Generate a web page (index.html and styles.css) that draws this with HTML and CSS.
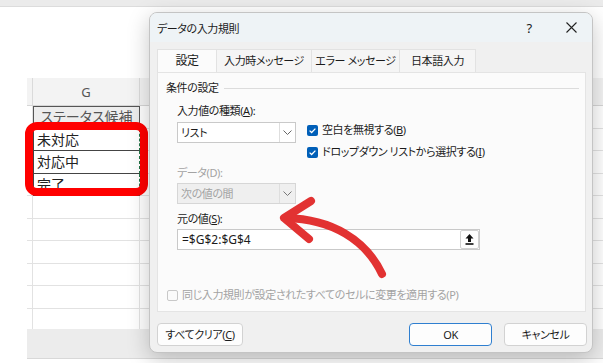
FILE: index.html
```html
<!DOCTYPE html>
<html lang="ja">
<head>
    <meta charset="UTF-8">
    <meta name="viewport" content="width=device-width, initial-scale=1.0">
    <title>データの入力規則</title>
    <link rel="stylesheet" href="styles.css">
</head>
<body>

<div class="screen">
    <!-- Excel sheet behind the dialog -->
    <div class="ribbon-edge"></div>
    <div class="sheet">
        <div class="row col-head">
            <div class="cell c-f"></div>
            <div class="cell c-g">G</div>
            <div class="cell c-h"></div>
        </div>
        <div class="row">
            <div class="cell c-f"></div>
            <div class="cell c-g title-cell">ステータス候補</div>
            <div class="cell c-h"></div>
        </div>
        <div class="row">
            <div class="cell c-f"></div>
            <div class="cell c-g pick">未対応</div>
            <div class="cell c-h"></div>
        </div>
        <div class="row">
            <div class="cell c-f"></div>
            <div class="cell c-g pick">対応中</div>
            <div class="cell c-h"></div>
        </div>
        <div class="row">
            <div class="cell c-f"></div>
            <div class="cell c-g pick">完了</div>
            <div class="cell c-h"></div>
        </div>
        <div class="row"><div class="cell c-f"></div><div class="cell c-g"></div><div class="cell c-h"></div></div>
        <div class="row"><div class="cell c-f"></div><div class="cell c-g"></div><div class="cell c-h"></div></div>
        <div class="row"><div class="cell c-f"></div><div class="cell c-g"></div><div class="cell c-h"></div></div>
        <div class="row"><div class="cell c-f"></div><div class="cell c-g"></div><div class="cell c-h"></div></div>
        <div class="row"><div class="cell c-f"></div><div class="cell c-g"></div><div class="cell c-h"></div></div>
        <div class="row"><div class="cell c-f"></div><div class="cell c-g"></div><div class="cell c-h"></div></div>
    </div>
    <div class="sheet-tabs"></div>

    <!-- red marker around the list cells -->
    <div class="marker-box"></div>

    <!-- the dialog window -->
    <div class="dialog">
        <div class="dlg-title">
            <span class="dlg-caption">データの入力規則</span>
            <span class="tb-help">?</span>
            <span class="tb-close">
                <svg width="11" height="11" viewBox="0 0 11 11"><path d="M0.5 0.5 L10.5 10.5 M10.5 0.5 L0.5 10.5" stroke="#222" stroke-width="1.1" fill="none"/></svg>
            </span>
        </div>

        <div class="tabs">
            <div class="tab active">設定</div>
            <div class="tab t2">入力時メッセージ</div>
            <div class="tab t3">エラー メッセージ</div>
            <div class="tab t4">日本語入力</div>
        </div>

        <div class="panel">
            <div class="legend">条件の設定</div>
            <div class="group-body">
                <div class="field-label">入力値の種類(<u>A</u>):</div>
                <div class="type-row">
                    <div class="select">
                        <span class="select-text">リスト</span>
                        <span class="select-arrow">
                            <svg width="9" height="5" viewBox="0 0 9 5"><path d="M0.5 0.5 L4.5 4.5 L8.5 0.5" stroke="#666" stroke-width="1" fill="none"/></svg>
                        </span>
                    </div>
                    <div class="checks">
                        <div class="check-item">
                            <span class="checkbox on">
                                <svg width="11" height="11" viewBox="0 0 11 11"><path d="M2.6 5.6 L4.6 7.5 L8.4 3.6" stroke="#fff" stroke-width="1.3" fill="none"/></svg>
                            </span>
                            空白を無視する(<u>B</u>)
                        </div>
                        <div class="check-item">
                            <span class="checkbox on">
                                <svg width="11" height="11" viewBox="0 0 11 11"><path d="M2.6 5.6 L4.6 7.5 L8.4 3.6" stroke="#fff" stroke-width="1.3" fill="none"/></svg>
                            </span>
                            ドロップダウン リストから選択する(<u>I</u>)
                        </div>
                    </div>
                </div>
                <div class="field-label muted second">データ(D):</div>
                <div class="select disabled">
                    <span class="select-text">次の値の間</span>
                    <span class="select-arrow">
                        <svg width="9" height="5" viewBox="0 0 9 5"><path d="M0.5 0.5 L4.5 4.5 L8.5 0.5" stroke="#777" stroke-width="1" fill="none"/></svg>
                    </span>
                </div>
                <div class="field-label third">元の値(<u>S</u>):</div>
                <div class="ref-input">
                    <span class="ref-text">=$G$2:$G$4</span>
                    <span class="ref-btn">
                        <svg width="9" height="11" viewBox="0 0 9 11"><path d="M4.5 0 L8.5 4.4 H6 V8 H3 V4.4 H0.5 Z" fill="#111"/><rect x="0.5" y="9.2" width="8" height="1.6" fill="#111"/></svg>
                    </span>
                </div>
            </div>
            <div class="apply-row">
                <span class="checkbox off"></span>
                同じ入力規則が設定されたすべてのセルに変更を適用する(P)
            </div>
        </div>

        <div class="dlg-footer">
            <div class="btn clear">すべてクリア(<u>C</u>)</div>
            <div class="btn ok">OK</div>
            <div class="btn cancel">キャンセル</div>
        </div>
    </div>

    <!-- red hand-drawn arrow pointing at the source field -->
    <svg class="marker-arrow" width="603" height="363" viewBox="0 0 603 363">
        <path d="M382 274 C366 240, 332 219, 286 218" stroke="#e23232" stroke-width="8" fill="none" stroke-linecap="round"/>
        <path d="M311 201 L284 218 L309 239" stroke="#e23232" stroke-width="8" fill="none" stroke-linecap="round" stroke-linejoin="round"/>
    </svg>
</div>

</body>
</html>
```

FILE: styles.css
```css
html, body {
    margin: 0;
    padding: 0;
    width: 603px;
    height: 363px;
    overflow: hidden;
    background: #fff;
}
body {
    font-family: "Noto Sans", "Noto Sans CJK JP", sans-serif;
    font-feature-settings: "palt";
    color: #1b1b1b;
}
.screen {
    position: relative;
    width: 603px;
    height: 363px;
    overflow: hidden;
}

/* sheet */
.ribbon-edge {
    height: 6px;
    background: #ebebeb;
    border-bottom: 1px solid #dcdcdc;
}
.sheet {
    margin-top: 71px;
    margin-left: 27px;
    height: 251px;
    overflow: hidden;
}
.row {
    display: flex;
    height: 22.5px;
    border-bottom: 1px solid #e2e2e2;
    box-sizing: border-box;
}
.cell {
    box-sizing: border-box;
    border-right: 1px solid #e2e2e2;
    font-size: 14px;
    line-height: 21px;
    color: #222;
}
.c-f { width: 6px; }
.c-g { width: 107px; padding-left: 3px; white-space: nowrap; overflow: hidden; }
.c-h { flex: 1; border-right: none; }
.col-head {
    height: 28px;
    background: #f3f3f3;
    border-bottom: 1px solid #d6d6d6;
}
.col-head .cell {
    line-height: 28px;
    color: #555;
    font-size: 13px;
    border-right-color: #dadada;
}
.col-head .c-g { text-align: center; padding-left: 0; }
.title-cell {
    background: #ededed;
    border: 1px solid #555;
    text-align: center;
    padding-left: 0;
    color: #555;
    line-height: 20px;
}
.pick {
    border-left: 1px solid #444;
    border-bottom: 1px solid #444;
    border-right: 1px dashed #217346;
    margin-bottom: -1px;
    line-height: 21px;
}
.sheet-tabs {
    height: 29px;
    margin-left: 27px;
    background: #ececec;
    border-bottom: 1px solid #d8d8d8;
}

/* annotations */
.marker-box {
    position: absolute;
    left: 25px;
    top: 122px;
    width: 123px;
    height: 74px;
    box-sizing: border-box;
    border: 8px solid #ff0000;
    border-radius: 12px;
}
.marker-arrow {
    position: absolute;
    left: 0;
    top: 0;
}

/* dialog */
.dialog {
    position: absolute;
    left: 149px;
    top: 12px;
    width: 444px;
    height: 341px;
    box-sizing: border-box;
    background: #f0f0f0;
    border: 1px solid #c4c4c4;
    border-radius: 8px;
    box-shadow: 0 6px 22px rgba(0, 0, 0, 0.22);
    display: flex;
    flex-direction: column;
    overflow: hidden;
    font-size: 11px;
    letter-spacing: -0.4px;
}
.dlg-title {
    height: 29px;
    background: #eef3f6;
    display: flex;
    align-items: center;
    padding-left: 7px;
}
.dlg-caption { flex: 1; }
.tb-help {
    width: 22px;
    margin-right: 10px;
    text-align: center;
    font-size: 13px;
}
.tb-close {
    width: 42px;
    display: flex;
    justify-content: center;
}

.tabs {
    display: flex;
    margin: 7px 0 0 7px;
    height: 23px;
}
.tab {
    box-sizing: border-box;
    height: 23px;
    line-height: 22px;
    text-align: center;
    background: #f5f5f5;
    border: 1px solid #e2e2e2;
    border-bottom: none;
    margin-left: -1px;
    white-space: nowrap;
}
.tab.active {
    width: 60px;
    background: #fbfbfb;
    margin-left: 0;
    font-size: 12px;
}
.tab.t2 { width: 96px; }
.tab.t3 { width: 89px; }
.tab.t4 { width: 77px; }

.panel {
    margin: 0 6px 0 7px;
    height: 240px;
    box-sizing: border-box;
    background: #fbfbfb;
    border: 1px solid #e4e4e4;
    display: flex;
    flex-direction: column;
}
.legend {
    margin: 7px 6px 0 8px;
    line-height: 16px;
    display: flex;
    align-items: center;
}
.legend::after {
    content: "";
    flex: 1;
    border-top: 1px solid #dcdcdc;
    margin-left: 5px;
}
.group-body { padding-left: 19px; }
.field-label {
    line-height: 16px;
    margin-top: 7px;
}
.field-label.second { margin-top: 5px; }
.field-label.third { margin-top: 7px; }
.muted { color: #a3a3a3; }
.type-row {
    display: flex;
    margin-top: 3px;
}
.select {
    width: 119px;
    height: 21px;
    box-sizing: border-box;
    background: #fff;
    border: 1px solid #c9c9c9;
    display: flex;
}
.select.disabled {
    margin-top: 2px;
    background: #efefef;
    border-color: #d6d6d6;
    color: #a3a3a3;
}
.select-text {
    flex: 1;
    padding-left: 3px;
    line-height: 19px;
}
.select-arrow {
    width: 15px;
    border-left: 1px solid #dedede;
    display: flex;
    align-items: center;
    justify-content: center;
}
.checks {
    margin-left: 11px;
    display: flex;
    flex-direction: column;
    gap: 6px;
}
.check-item {
    display: flex;
    align-items: center;
    line-height: 16px;
    white-space: nowrap;
}
.checkbox {
    width: 11px;
    height: 11px;
    box-sizing: border-box;
    border-radius: 2px;
    margin-right: 4px;
    display: inline-flex;
}
.checkbox.on { background: #005fb8; }
.checkbox.off {
    background: #fafafa;
    border: 1px solid #c8c8c8;
}
.ref-input {
    margin-top: 2px;
    width: 303px;
    height: 21px;
    box-sizing: border-box;
    background: #fff;
    border: 1px solid #c9c9c9;
    display: flex;
}
.ref-text {
    flex: 1;
    padding-left: 4px;
    line-height: 19px;
    font-size: 12px;
    letter-spacing: 0;
}
.ref-btn {
    width: 19px;
    height: 19px;
    box-sizing: border-box;
    border: 1px solid #d0d0d0;
    border-radius: 2px;
    background: #fdfdfd;
    display: flex;
    align-items: center;
    justify-content: center;
}
.apply-row {
    margin: auto 0 8px 9px;
    line-height: 16px;
    color: #a3a3a3;
    display: flex;
    align-items: center;
    white-space: nowrap;
}

.dlg-footer {
    display: flex;
    margin: 11px 5px 0 7px;
}
.btn {
    height: 23px;
    box-sizing: border-box;
    line-height: 21px;
    text-align: center;
    background: #fdfdfd;
    border: 1px solid #d2d2d2;
    border-radius: 4px;
}
.btn.clear { width: 86px; }
.btn.ok {
    width: 83px;
    margin-left: auto;
    border-color: #2f7fd0;
}
.btn.cancel {
    width: 83px;
    margin-left: 12px;
}
```
